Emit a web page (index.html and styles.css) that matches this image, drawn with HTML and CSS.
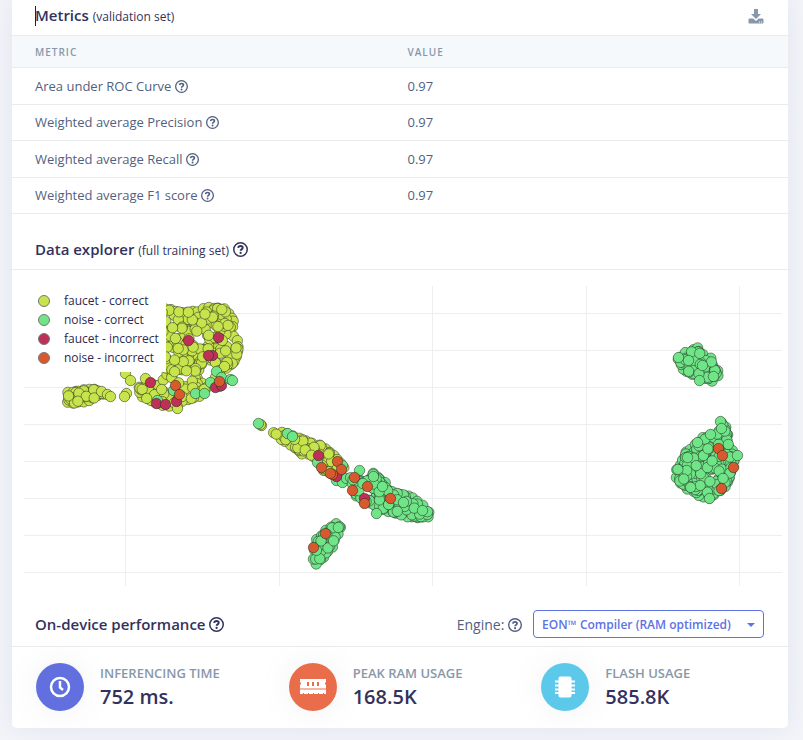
FILE: index.html
```html
<!DOCTYPE html>
<html lang="en">
<head>
<meta charset="utf-8">
<title>Model metrics</title>
<link rel="stylesheet" href="styles.css">
</head>
<body>
<svg class="defs" aria-hidden="true">
  <symbol id="help" viewBox="0 0 16 16">
    <circle cx="8" cy="8" r="7.200" fill="none" stroke="currentColor" stroke-width="1.600"/>
    <path d="M5.500 6.300c.2-1.300 1.100-2 2.500-2 1.400 0 2.400.8 2.400 1.900 0 1.600-2.300 1.700-2.300 3.200" fill="none" stroke="currentColor" stroke-width="2"/>
    <circle cx="8.100" cy="11.600" r="1.200" fill="currentColor"/>
  </symbol>
</svg>
<main class="card">
  <header class="head head-first">
    <h2><span class="caret"></span>Metrics <small>(validation set)</small></h2>
    <button class="download" aria-label="Download">
      <svg viewBox="0 0 16 16"><path fill="currentColor" fill-rule="evenodd" d="M6 1h4v5h3L8 11 3 6h3zM1.500 10.500h3.700L8 13l2.800-2.500h3.700q1 0 1 1v3q0 1-1 1h-13q-1 0-1-1v-3q0-1 1-1zM11 13.500v1h1v-1zm2 0v1h1v-1z"/></svg>
    </button>
  </header>

  <table class="metrics">
    <thead><tr><th scope="col">METRIC</th><th scope="col">VALUE</th></tr></thead>
    <tbody>
      <tr><td>Area under ROC Curve <svg class="help"><use href="#help"/></svg></td><td>0.97</td></tr>
      <tr><td>Weighted average Precision <svg class="help"><use href="#help"/></svg></td><td>0.97</td></tr>
      <tr><td>Weighted average Recall <svg class="help"><use href="#help"/></svg></td><td>0.97</td></tr>
      <tr><td>Weighted average F1 score <svg class="help"><use href="#help"/></svg></td><td>0.97</td></tr>
    </tbody>
  </table>

  <header class="head head-explorer">
    <h2>Data explorer <small>(full training set)</small> <svg class="help help-lg"><use href="#help"/></svg></h2>
  </header>
  <div class="chart">
    <svg id="plot" viewBox="24 286 758 300" role="img" aria-label="Data explorer scatter plot"></svg>
    <ul class="legend">
      <li><i class="dot fc"></i>faucet - correct</li>
      <li><i class="dot nc"></i>noise - correct</li>
      <li><i class="dot fi"></i>faucet - incorrect</li>
      <li><i class="dot ni"></i>noise - incorrect</li>
    </ul>
  </div>

  <header class="head head-device">
    <h2>On-device performance <svg class="help help-lg"><use href="#help"/></svg></h2>
    <div class="engine">
      <label for="engine">Engine: <svg class="help help-md"><use href="#help"/></svg></label>
      <div class="picker">
        <select id="engine"><option>EON™ Compiler (RAM optimized)</option></select>
      </div>
    </div>
  </header>
  <section class="stats">
    <div class="stat">
      <span class="badge time"><svg viewBox="0 0 24 24"><circle cx="12" cy="12" r="9" fill="none" stroke="#fff" stroke-width="2.500"/><path d="M12 6v6.500l3 2.500" fill="none" stroke="#fff" stroke-width="2.500"/></svg></span>
      <div><h3>INFERENCING TIME</h3><p>752 ms.</p></div>
    </div>
    <div class="stat">
      <span class="badge ram"><svg class="wide" viewBox="0 0 28 24"><path fill="#fff" fill-rule="evenodd" d="M1 4h26v3q-2 1.500 0 3v3.500H1V10q2-1.500 0-3zM8 7v4h2V7zm5 0v4h2V7zm5 0v4h2V7zM1 14.500h26V19h-2v-1h-1v1h-4v-1h-1v1h-4v-1h-1v1h-4v-1H9v1H5v-1H4v1H1z"/></svg></span>
      <div><h3>PEAK RAM USAGE</h3><p>168.5K</p></div>
    </div>
    <div class="stat">
      <span class="badge flash"><svg viewBox="0 0 24 24"><rect x="5.500" y="1.500" width="13" height="21" rx="2" fill="#fff"/><path d="M2 6.500h20M2 10.500h20M2 14.500h20M2 18h20" stroke="#fff" stroke-width="2"/></svg></span>
      <div><h3>FLASH USAGE</h3><p>585.8K</p></div>
    </div>
  </section>
</main>
<script src="plot.js"></script>
</body>
</html>
```
FILE: styles.css
```css
* { box-sizing: border-box; }
body {
  margin: 0;
  padding: 0 15px 12px 12px;
  background: #f3f4fa;
  font-family: "Open Sans", sans-serif;
  font-size: 14px;
  color: #525f7f;
}
h2, h3, p, ul { margin: 0; padding: 0; }
.defs { position: absolute; width: 0; height: 0; }
.card {
  background: #fff;
  border-radius: 0 0 5px 5px;
  box-shadow: 0 0 24px rgba(136, 152, 170, .15);
}
.head {
  display: flex;
  justify-content: space-between;
  align-items: center;
  margin: 0 -4px;
  padding: 0 28px 0 27px;
  border-bottom: 1px solid #e9ecef;
}
.head-first { height: 36px; padding-bottom: 4px; }
.head-explorer { height: 56px; padding-top: 16px; }
.head-device { height: 61px; padding-top: 16px; }
h2 {
  font-size: 15px;
  line-height: 24px;
  font-weight: 600;
  color: #32325d;
}
h2 small { font-size: 12px; font-weight: 400; }
.caret {
  display: inline-block;
  width: 1px;
  height: 20px;
  margin-right: -1px;
  background: #222;
  vertical-align: middle;
}
.help { width: 13px; height: 13px; vertical-align: -2px; }
.help-md { width: 14px; height: 14px; }
.help-lg { width: 15px; height: 15px; }
.download {
  border: 0;
  padding: 0;
  background: none;
  color: #8898aa;
  height: 16px;
}
.download svg { display: block; width: 16px; height: 16px; }

.metrics {
  width: 100%;
  height: 178px;
  border-collapse: separate;
  border-spacing: 0;
  table-layout: fixed;
}
.metrics th, .metrics td {
  padding: 0 23px;
  text-align: left;
  border-bottom: 1px solid #e9ecef;
}
.metrics th:first-child { width: 48%; }
.metrics th {
  height: 32px;
  background: #f6f9fc;
  color: #8898aa;
  font-size: 10px;
  font-weight: 600;
  letter-spacing: 1px;
}
.metrics td { font-size: 13px; line-height: 20px; }

.chart { position: relative; padding: 16px 6px 0 12px; }
#plot { display: block; width: 100%; }
.legend {
  position: absolute;
  left: 12px;
  top: 16px;
  width: 142px;
  padding: 5px 0 5px 14px;
  list-style: none;
  background: #fff;
  color: #2a2a55;
  font-size: 12px;
  line-height: 19px;
}
.legend li { display: flex; align-items: center; }
.dot {
  width: 12px;
  height: 12px;
  margin-right: 14px;
  border: 1px solid #777;
  border-radius: 50%;
}
.fc { fill: #c8e44c; background: #c8e44c; }
.nc { fill: #6fe587; background: #6fe587; }
.fi { fill: #bf3058; background: #bf3058; }
.ni { fill: #d9592e; background: #d9592e; }
.point { stroke: #202820; stroke-opacity: .5; stroke-width: 1; }
.grid { stroke: #eee; stroke-width: 1; }

.engine { display: flex; align-items: center; gap: 11px; }
.picker { position: relative; }
.picker::after {
  content: "";
  position: absolute;
  right: 9px;
  top: 13px;
  border: 4px solid transparent;
  border-top-color: #5e72e4;
  border-bottom: 0;
  pointer-events: none;
}
.picker select {
  display: block;
  appearance: none;
  height: 28px;
  padding: 0 32px 0 8px;
  border: 1px solid #5e72e4;
  border-radius: 4px;
  background: #fff;
  color: #5e72e4;
  font: 600 12px "Open Sans", sans-serif;
}

.stats {
  display: grid;
  grid-template-columns: repeat(3, 1fr);
  gap: 30px;
  padding: 16px 24px 17px;
}
.stat { display: flex; gap: 16px; align-items: center; white-space: nowrap; }
.badge {
  display: flex;
  flex: none;
  align-items: center;
  justify-content: center;
  width: 48px;
  height: 48px;
  border-radius: 50%;
  box-shadow: 0 0 30px rgba(136, 152, 170, .12);
}
.badge svg { width: 24px; height: 24px; }
.badge .wide { width: 28px; }
.time { background: #6270df; }
.ram { background: #e96d4a; }
.flash { background: #5cc9ea; }
h3 { font-size: 13px; line-height: 20px; font-weight: 600; color: #8898aa; }
.stat p { font-size: 20px; line-height: 28px; font-weight: 600; color: #32325d; }
```
FILE: plot.js
```js
const plot = document.getElementById("plot");
const NS = "http://www.w3.org/2000/svg";

function add(tag, attrs) {
  const el = document.createElementNS(NS, tag);
  for (const k in attrs) el.setAttribute(k, attrs[k]);
  plot.appendChild(el);
}
[313, 350, 387, 424, 461, 498, 535, 572].forEach(y =>
  add("line", { class: "grid", x1: 24, x2: 782, y1: y + .5, y2: y + .5 }));
[125, 279, 432, 586, 739].forEach(x =>
  add("line", { class: "grid", x1: x + .5, x2: x + .5, y1: 286, y2: 586 }));

let seed = 7;
function rnd() {
  seed = (seed * 16807) % 2147483647;
  return seed / 2147483647;
}
function point(cls, x, y) {
  add("circle", { class: "point " + cls, cx: x + .5, cy: y + .5, r: 5.2 });
}
function inside(poly, x, y) {
  let hit = false;
  for (let i = 0, j = poly.length - 1; i < poly.length; j = i++) {
    const [a, b] = poly[i], [c, d] = poly[j];
    if ((b > y) !== (d > y) && x < (c - a) * (y - b) / (d - b) + a) hit = !hit;
  }
  return hit;
}
// Scatters points along the hull of a cluster, then through its inside.
function cluster(cls, poly, count) {
  poly.forEach(([x, y], i) => {
    const [u, v] = poly[(i + 1) % poly.length];
    const n = Math.max(1, Math.round(Math.hypot(u - x, v - y) / 6));
    for (let k = 0; k < n; k++) point(cls, x + (u - x) * k / n + rnd() * 2 - 1, y + (v - y) * k / n + rnd() * 2 - 1);
  });
  const xs = poly.map(p => p[0]), ys = poly.map(p => p[1]);
  const x0 = Math.min(...xs), x1 = Math.max(...xs), y0 = Math.min(...ys), y1 = Math.max(...ys);
  // Later points keep clear of each other, so the top layer shows whole discs.
  const top = [];
  let tries = 0;
  while (count > 0) {
    const x = x0 + rnd() * (x1 - x0), y = y0 + rnd() * (y1 - y0);
    if (!inside(poly, x, y)) continue;
    point(cls, x, y);
    count--;
  }
  while (tries++ < 400) {
    const x = x0 + rnd() * (x1 - x0), y = y0 + rnd() * (y1 - y0);
    if (!inside(poly, x, y) || top.some(([a, b]) => Math.hypot(a - x, b - y) < 8)) continue;
    top.push([x, y]);
    point(cls, x, y);
  }
}
function points(cls, list) { list.forEach(([x, y]) => point(cls, x, y)); }

cluster("fc", [[160,309],[170,309],[181,312],[197,311],[208,307],[223,308],[228,313],[233,321],[230,332],[236,340],[238,351],[233,362],[226,368],[216,363],[205,357],[198,370],[196,378],[206,387],[198,396],[182,401],[176,405],[163,405],[153,402],[142,396],[138,386],[150,384],[159,386],[166,374]], 130);
points("fc", [[125,373],[130,380],[126,393],[124,396],[177,408],[219,370],[224,366],[215,377],[145,378]]);
cluster("fc", [[68,392],[68,401],[73,403],[83,401],[93,398],[102,393],[93,388],[83,389],[75,391]], 20);
points("fc", [[101,391],[107,394],[110,396],[261,425],[260,424]]);
cluster("fc", [[274,432],[281,432],[298,438],[312,442],[320,444],[329,451],[337,458],[343,468],[335,474],[323,470],[317,457],[302,453],[294,447],[280,438]], 30);
points("nc", [[258,423],[287,433],[292,436],[317,462],[342,465],[336,480],[342,482],[346,478],[359,470],[157,400],[173,390],[195,393],[204,393],[210,382],[216,371],[221,377],[230,379],[232,380],[219,386]]);
cluster("nc", [[350,478],[361,480],[369,478],[373,473],[380,479],[384,483],[387,490],[398,493],[413,497],[422,505],[428,511],[427,516],[417,517],[407,516],[395,513],[387,510],[376,506],[368,503],[356,496]], 70);
points("nc", [[376,513],[373,476],[382,486],[403,502],[422,510]]);
cluster("nc", [[336,523],[340,526],[338,533],[334,540],[331,546],[324,556],[316,563],[313,558],[313,550],[317,540],[325,529]], 20);
cluster("nc", [[677,359],[685,353],[693,349],[697,348],[702,354],[710,358],[713,366],[718,371],[717,376],[712,380],[703,377],[691,374],[683,369]], 25);
points("nc", [[678,357],[688,360],[702,365],[699,380],[713,376]]);
cluster("nc", [[721,423],[726,427],[727,434],[728,446],[736,455],[732,466],[729,477],[724,487],[709,497],[698,495],[687,488],[680,482],[675,477],[677,469],[682,460],[686,452],[695,445],[702,438],[712,435],[718,430]], 110);
points("nc", [[720,421],[721,428],[710,434],[697,442],[737,455],[709,498]]);
points("fi", [[188,340],[218,337],[212,355],[208,355],[150,382],[156,403],[165,404],[176,401],[215,387],[221,385],[318,455],[336,476],[364,498]]);
points("ni", [[175,385],[179,394],[219,381],[321,467],[337,461],[341,469],[332,474],[330,473],[354,477],[352,490],[367,486],[364,503],[390,498],[325,533],[313,547],[718,448],[722,455],[733,467],[721,488]]);
```
